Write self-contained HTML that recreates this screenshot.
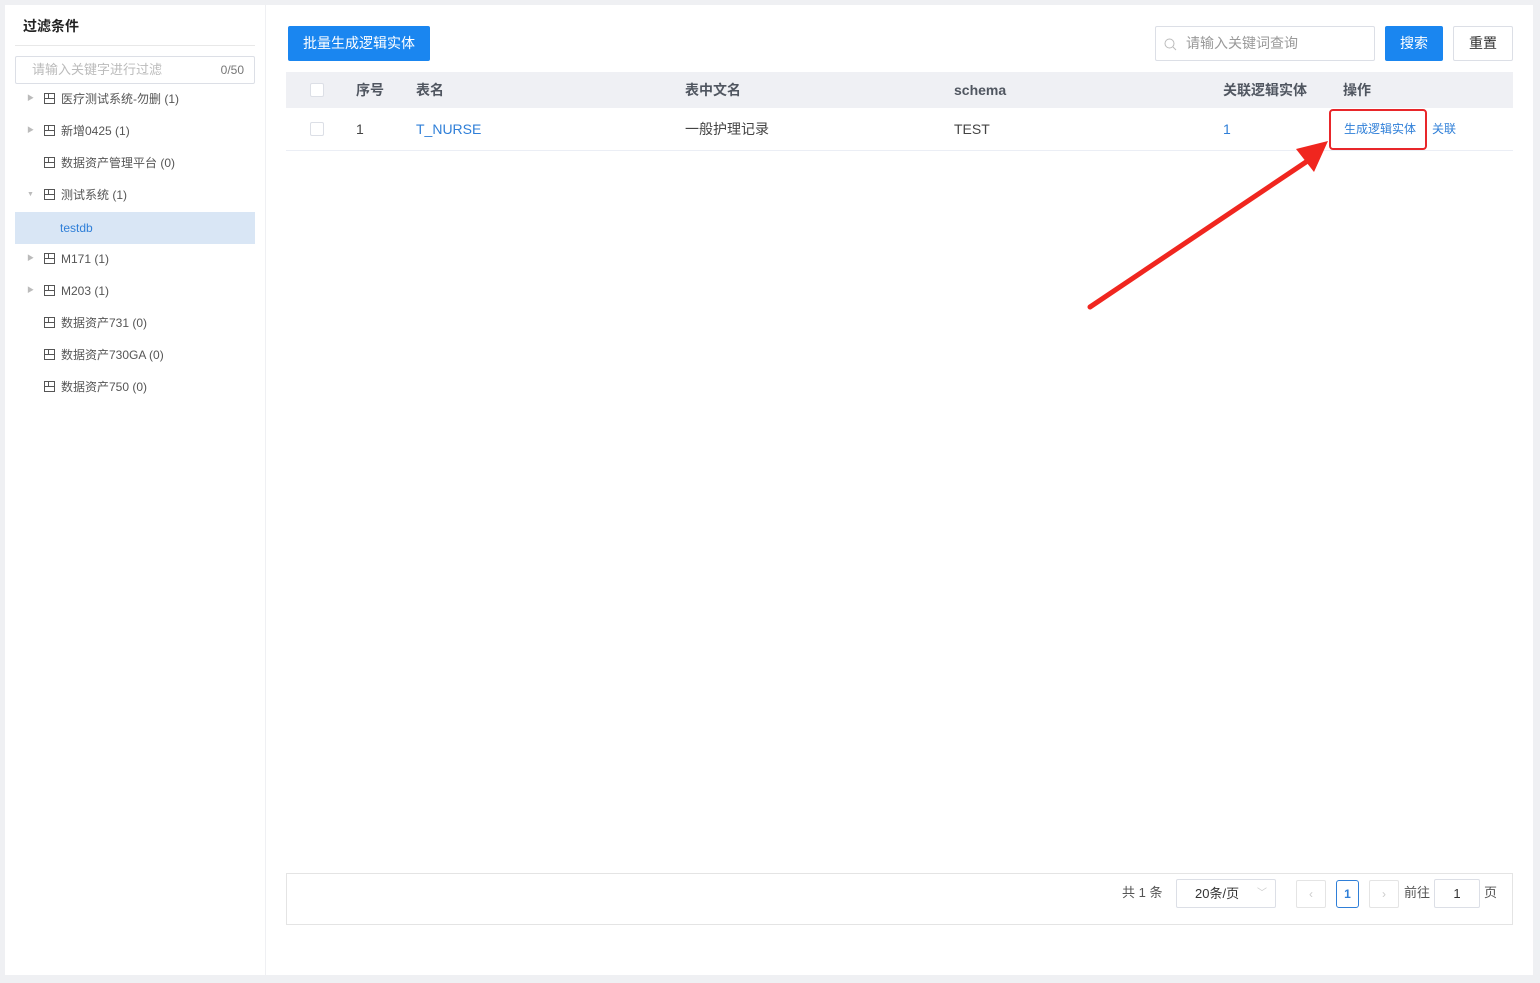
<!DOCTYPE html>
<html><head><meta charset="utf-8"><style>
*{box-sizing:border-box;margin:0;padding:0}
body{width:1540px;height:983px;background:#eff0f3;font-family:"Liberation Sans","Noto Sans CJK SC",sans-serif;position:relative;overflow:hidden;color:#333}
.abs{position:absolute}
.left{left:5px;top:5px;width:260px;height:970px;background:#fff}
.right{left:266px;top:5px;width:1267px;height:970px;background:#fff}
.tn{position:absolute;left:0;font-size:12px;color:#555;height:32px;line-height:32px;width:240px}
.tn .ar{position:absolute;left:12px;top:0;font-size:7px;color:#bbb}
.tn .ic{position:absolute;left:29px;top:10px;width:11px;height:11px;border:1px solid #555}
.tn .ic:after{content:"";position:absolute;left:0;right:0;top:4px;border-top:1px solid #555}
.tn .ic:before{content:"";position:absolute;left:3px;top:0;height:4px;border-left:1px solid #555}
.tn span.t{position:absolute;left:46px}
.cb{position:absolute;width:14px;height:14px;border:1px solid #dcdfe6;background:#fff;border-radius:2px}
.th{position:absolute;top:0;line-height:36px;font-size:14px;font-weight:bold;color:#505660}
.td{position:absolute;line-height:42px;font-size:14px;color:#444}
</style></head><body>
<div class="abs left">
  <div class="abs" style="left:18px;top:11px;font-size:14px;font-weight:bold;color:#222">过滤条件</div>
  <div class="abs" style="left:10px;top:40px;width:240px;border-top:1px solid #e8e8e8"></div>
  <div class="abs" style="left:10px;top:51px;width:240px;height:28px;border:1px solid #dcdfe6;border-radius:2px;font-size:13px;line-height:26px;color:#bbb;padding-left:16px">请输入关键字进行过滤<span style="position:absolute;right:10px;font-size:12px;color:#777">0/50</span></div>
  <div class="abs" style="left:10px;top:78px;width:240px;height:320px">
    <div class="tn" style="top:0"><span class="ar">▶</span><i class="ic"></i><span class="t">医疗测试系统-勿删 (1)</span></div>
    <div class="tn" style="top:32px"><span class="ar">▶</span><i class="ic"></i><span class="t">新增0425 (1)</span></div>
    <div class="tn" style="top:64px"><i class="ic"></i><span class="t">数据资产管理平台 (0)</span></div>
    <div class="tn" style="top:96px"><span class="ar">▼</span><i class="ic"></i><span class="t">测试系统 (1)</span></div>
    <div class="tn" style="top:129px;background:#d9e6f5;color:#2f7fd8"><span class="t" style="left:45px">testdb</span></div>
    <div class="tn" style="top:160px"><span class="ar">▶</span><i class="ic"></i><span class="t">M171 (1)</span></div>
    <div class="tn" style="top:192px"><span class="ar">▶</span><i class="ic"></i><span class="t">M203 (1)</span></div>
    <div class="tn" style="top:224px"><i class="ic"></i><span class="t">数据资产731 (0)</span></div>
    <div class="tn" style="top:256px"><i class="ic"></i><span class="t">数据资产730GA (0)</span></div>
    <div class="tn" style="top:288px"><i class="ic"></i><span class="t">数据资产750 (0)</span></div>
  </div>
</div>
<div class="abs right">
  <div class="abs" style="left:22px;top:21px;width:142px;height:35px;background:#1a86f0;border-radius:2px;color:#fff;font-size:14px;line-height:35px;text-align:center">批量生成逻辑实体</div>
  <div class="abs" style="left:889px;top:21px;width:220px;height:35px;border:1px solid #dcdfe6;border-radius:2px;font-size:14px;line-height:33px;color:#999;padding-left:30px">
    <svg style="position:absolute;left:8px;top:11px" width="13" height="13" viewBox="0 0 13 13"><circle cx="5.5" cy="5.5" r="4.5" fill="none" stroke="#bbb" stroke-width="1"/><path d="M9 9l3 3" stroke="#bbb"/></svg>请输入关键词查询</div>
  <div class="abs" style="left:1119px;top:21px;width:58px;height:35px;background:#1a86f0;border-radius:2px;color:#fff;font-size:14px;line-height:35px;text-align:center">搜索</div>
  <div class="abs" style="left:1187px;top:21px;width:60px;height:35px;border:1px solid #dcdfe6;border-radius:2px;color:#333;font-size:14px;line-height:33px;text-align:center">重置</div>
  <div class="abs" style="left:20px;top:67px;width:1227px;height:36px;background:#eff0f4">
    <div class="cb" style="left:24px;top:11px"></div>
    <div class="th" style="left:70px">序号</div>
    <div class="th" style="left:130px">表名</div>
    <div class="th" style="left:399px">表中文名</div>
    <div class="th" style="left:668px">schema</div>
    <div class="th" style="left:937px">关联逻辑实体</div>
    <div class="th" style="left:1057px">操作</div>
  </div>
  <div class="abs" style="left:20px;top:103px;width:1227px;height:43px;border-bottom:1px solid #ebeef5">
    <div class="cb" style="left:24px;top:14px"></div>
    <div class="td" style="left:70px">1</div>
    <div class="td" style="left:130px;color:#2f7fd8">T_NURSE</div>
    <div class="td" style="left:399px">一般护理记录</div>
    <div class="td" style="left:668px">TEST</div>
    <div class="td" style="left:937px;color:#2f7fd8">1</div>
    <div class="td" style="left:1058px;font-size:12px;color:#2f7fd8">生成逻辑实体</div>
    <div class="td" style="left:1146px;font-size:12px;color:#2f7fd8">关联</div>
    <div class="abs" style="left:1043px;top:1px;width:98px;height:41px;border:2px solid #e8262a;border-radius:4px"></div>
  </div>
  <div class="abs" style="left:20px;top:868px;width:1227px;height:52px;border:1px solid #e4e4e4">
    <div class="abs" style="left:835px;top:11px;font-size:13px;color:#555;line-height:16px">共 1 条</div>
    <div class="abs" style="left:889px;top:5px;width:100px;height:29px;border:1px solid #dcdfe6;border-radius:2px;font-size:13px;line-height:27px;padding-left:18px;color:#333">20条/页<span style="position:absolute;right:8px;color:#ccc;font-size:10px">﹀</span></div>
    <div class="abs" style="left:1009px;top:6px;width:30px;height:28px;border:1px solid #e4e4e4;border-radius:2px;color:#ccc;text-align:center;line-height:26px;font-size:12px">‹</div>
    <div class="abs" style="left:1049px;top:6px;width:23px;height:28px;border:1px solid #2f7fd8;border-radius:3px;color:#2f7fd8;text-align:center;line-height:26px;font-size:12px;font-weight:bold">1</div>
    <div class="abs" style="left:1082px;top:6px;width:30px;height:28px;border:1px solid #e4e4e4;border-radius:2px;color:#ccc;text-align:center;line-height:26px;font-size:12px">›</div>
    <div class="abs" style="left:1117px;top:11px;font-size:13px;color:#555;line-height:16px">前往</div>
    <div class="abs" style="left:1147px;top:5px;width:46px;height:29px;border:1px solid #dcdfe6;border-radius:2px;font-size:13px;line-height:27px;text-align:center;color:#333">1</div>
    <div class="abs" style="left:1197px;top:11px;font-size:13px;color:#555;line-height:16px">页</div>
  </div>
</div>
<svg class="abs" style="left:0;top:0" width="1540" height="983">
  <path d="M1090 307 L1306 162" stroke="#f0261f" stroke-width="5" stroke-linecap="round"/>
  <path d="M1328 141 L1296 149 L1314 172 Z" fill="#f0261f"/>
</svg>
</body></html>
